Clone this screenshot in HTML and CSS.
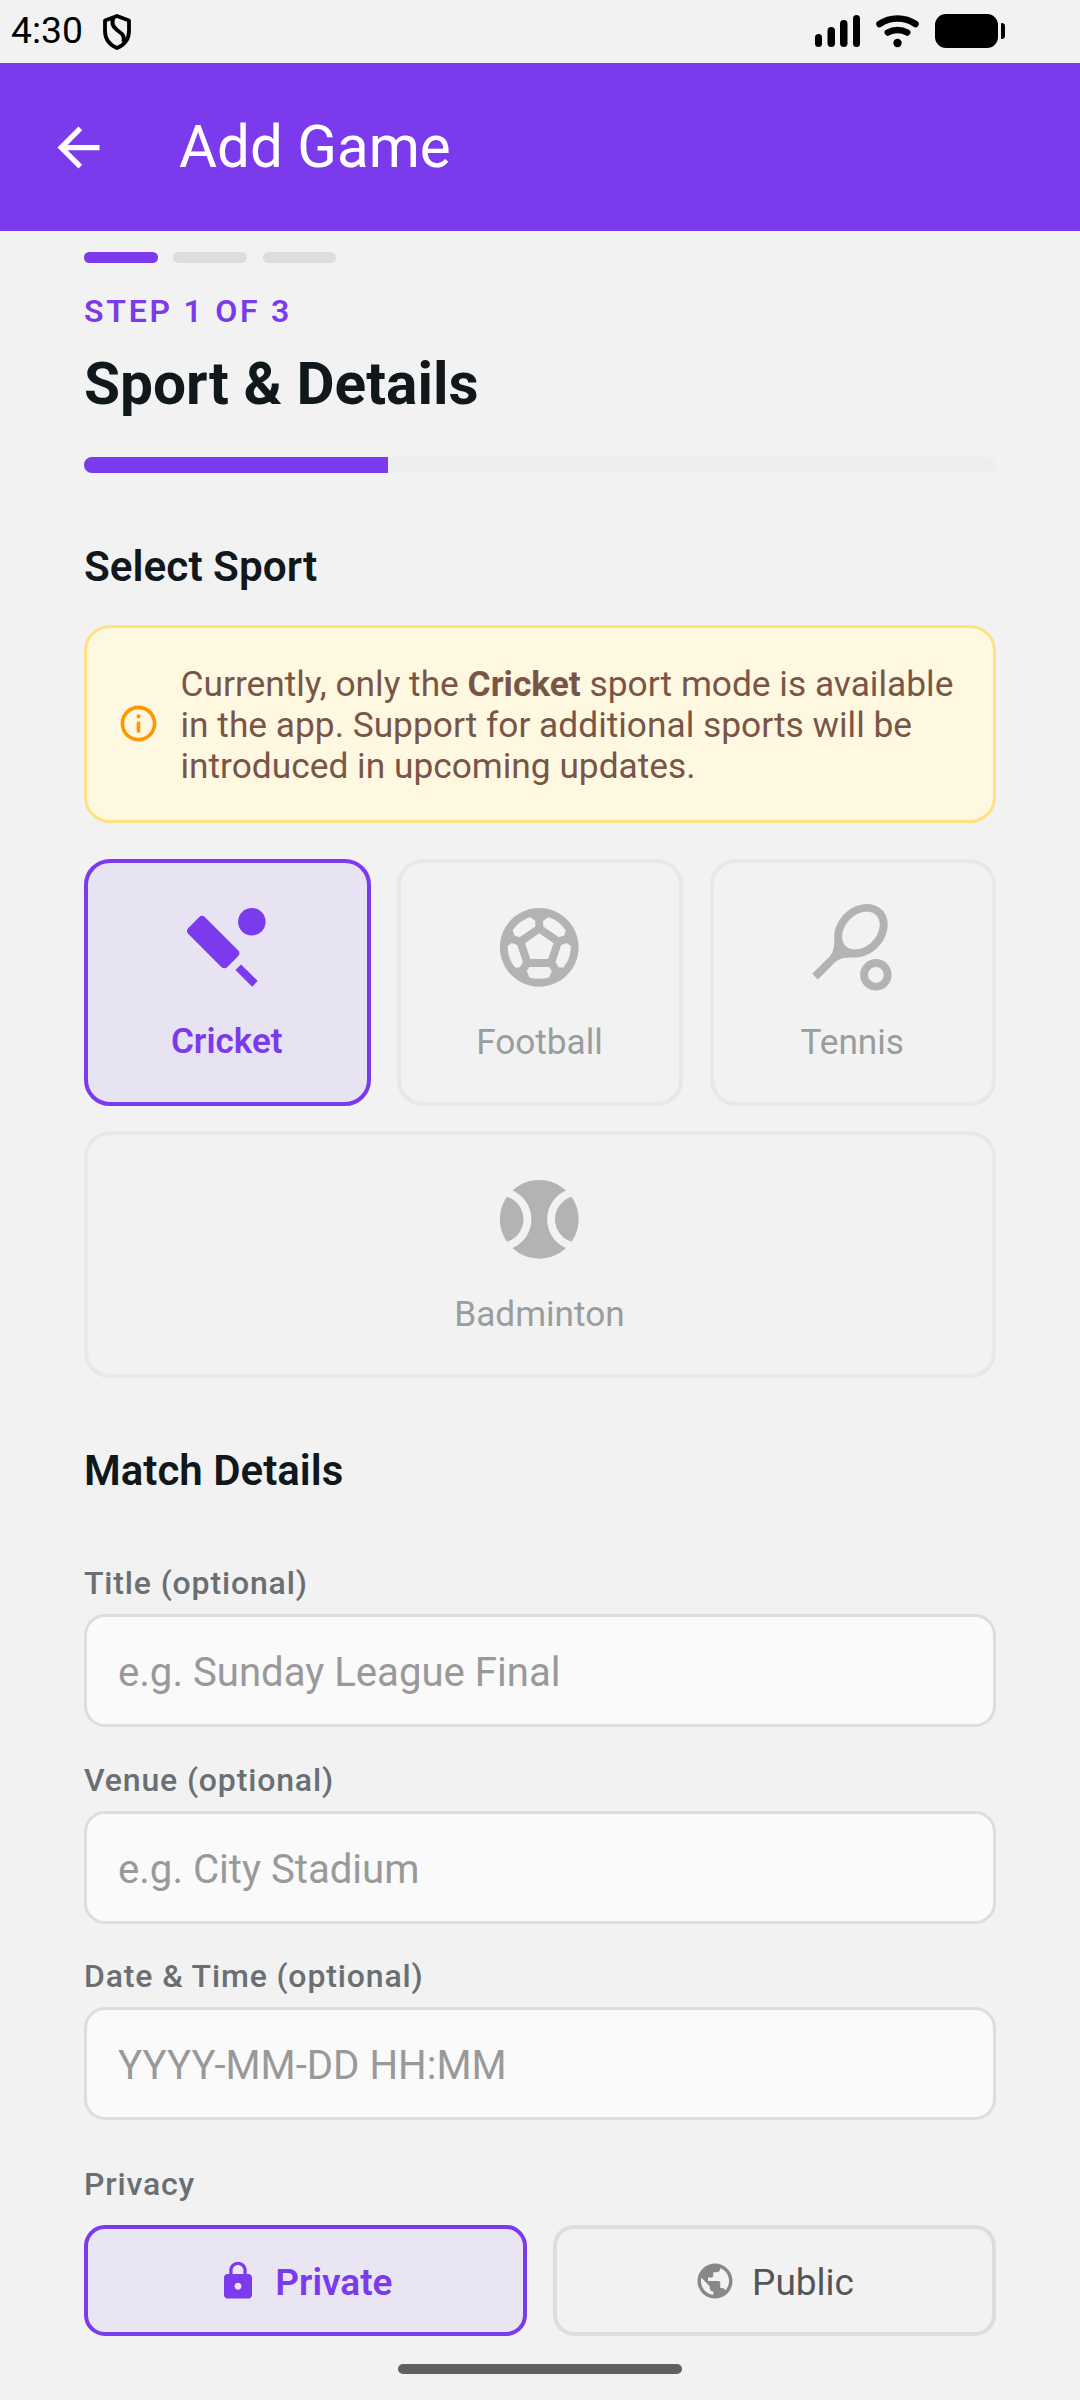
FILE: index.html
```html
<!DOCTYPE html>
<html lang="en">
<head>
<meta charset="utf-8">
<title>Add Game</title>
<link rel="stylesheet" href="styles.css">
</head>
<body>
<div class="screen">
  <div class="status">
    <span class="clock">4:30</span>
    <svg class="shield" viewBox="0 0 30 36"><path d="M15 2 27 6.500V17C27 25 22 31 15 34 8 31 3 25 3 17V6.500Z" fill="none" stroke="#000" stroke-width="3.800" stroke-linejoin="round"/><path d="M11.500 3.500C9 9 10.500 12.500 15 16 20.500 20 23 22 21.500 28" fill="none" stroke="#000" stroke-width="4"/></svg>
    <svg class="signals" viewBox="0 0 192 36">
      <g fill="#000">
        <rect x="0" y="20" width="7" height="13" rx="3.500"/>
        <rect x="12.500" y="13" width="7.500" height="20" rx="3.700"/>
        <rect x="25" y="6" width="7.500" height="27" rx="3.700"/>
        <rect x="38" y="1" width="7" height="32" rx="3.500"/>
        <circle cx="82.500" cy="29" r="4.200"/>
        <rect x="120" y="0" width="63" height="34" rx="11"/>
        <path d="M186 9c3 0 4 1 4 3v9c0 3-1 4-4 4z"/>
      </g>
      <path d="M64.500 10C75 2.500 90 2.500 100.500 10" fill="none" stroke="#000" stroke-width="6.500" stroke-linecap="round"/>
      <path d="M72.800 18.500C78.500 15.300 86.500 15.300 92.200 18.500" fill="none" stroke="#000" stroke-width="6.500" stroke-linecap="round"/>
    </svg>
  </div>
  <header class="appbar">
    <svg class="back" viewBox="0 0 24 24"><path fill="#fff" d="M20 11H7.830l5.590-5.590L12 4l-8 8 8 8 1.410-1.410L7.830 13H20v-2z"/></svg>
    <h1 class="appbar-title">Add Game</h1>
  </header>
  <main class="content">
    <div class="steps"><i class="step on"></i><i class="step"></i><i class="step"></i></div>
    <p class="step-label">STEP 1 OF 3</p>
    <h2 class="page-title">Sport &amp; Details</h2>
    <div class="progress"><div class="progress-fill"></div></div>

    <h3 class="section">Select Sport</h3>
    <div class="notice">
      <svg class="notice-icon" viewBox="0 0 24 24"><path fill="#ff9800" d="M11 7h2v2h-2zm0 4h2v6h-2zm1-9C6.480 2 2 6.480 2 12s4.480 10 10 10 10-4.480 10-10S17.520 2 12 2zm0 18c-4.410 0-8-3.590-8-8s3.590-8 8-8 8 3.590 8 8-3.590 8-8 8z"/></svg>
      <p class="notice-text">Currently, only the <b>Cricket</b> sport mode is available<br>in the app. Support for additional sports will be<br>introduced in upcoming updates.</p>
    </div>

    <div class="sports">
      <div class="sport selected">
        <svg class="sport-icon" viewBox="0 0 24 24"><path d="M15.050 12.810 6.560 4.320c-.39-.39-1.020-.39-1.410 0L2.320 7.150c-.39.39-.39 1.020 0 1.410l8.490 8.490c.39.39 1.020.39 1.410 0l2.830-2.830c.39-.39.39-1.020 0-1.410zM14.340 17.760l1.410-1.410 4.240 4.240L18.580 22z"/><circle cx="18.500" cy="5.500" r="3.500"/></svg>
        <span class="sport-name">Cricket</span>
      </div>
      <div class="sport">
        <svg class="sport-icon" viewBox="0 0 24 24"><path d="M12,2C6.480,2,2,6.480,2,12c0,5.520,4.480,10,10,10s10-4.480,10-10C22,6.480,17.520,2,12,2z M13,5.300l1.350-0.950c1.820,0.560,3.370,1.760,4.380,3.340l-0.390,1.340l-1.350,0.460L13,6.700V5.300z M9.650,4.350L11,5.300v1.400L7.010,9.490L5.660,9.030L5.270,7.690C6.280,6.120,7.830,4.920,9.650,4.350z M7.080,17.110l-1.140,0.100C4.730,15.810,4,13.990,4,12c0-0.120,0.010-0.230,0.020-0.350l1-0.730L6.400,11.400l1.460,4.340L7.080,17.110z M14.500,19.590C13.710,19.850,12.870,20,12,20s-1.710-0.150-2.500-0.410l-0.690-1.490L9.450,17h5.110l0.640,1.110L14.500,19.590z M14.270,15H9.730l-1.350-4.020L12,8.440l3.630,2.540L14.270,15z M18.060,17.210l-1.140-0.100l-0.790-1.370l1.460-4.340l1.390-0.470l1,0.730C19.990,11.770,20,11.880,20,12C20,13.990,19.270,15.810,18.060,17.210z"/></svg>
        <span class="sport-name">Football</span>
      </div>
      <div class="sport">
        <svg class="sport-icon" viewBox="0 0 24 24"><path d="M19.520,2.490c-2.340-2.340-6.620-1.870-9.550,1.060c-1.600,1.600-2.520,3.870-2.540,5.460c-0.020,1.580,0.260,3.890-1.350,5.500l-4.240,4.240l1.420,1.420l4.240-4.240c1.610-1.610,3.920-1.330,5.500-1.350s3.860-0.940,5.460-2.540C21.380,9.110,21.860,4.830,19.520,2.490z M10.320,11.680c-1.530-1.530-1.050-4.610,1.060-6.720s5.180-2.590,6.720-1.060c1.530,1.530,1.050,4.610-1.060,6.720S11.860,13.210,10.320,11.680z M18,17c0.530,0,1.040,0.210,1.410,0.590c0.780,0.780,0.780,2.050,0,2.830C19.040,20.790,18.530,21,18,21s-1.040-0.210-1.410-0.590c-0.780-0.780-0.780-2.050,0-2.830C16.960,17.210,17.470,17,18,17 M18,15c-1.020,0-2.050,0.390-2.830,1.170c-1.560,1.560-1.560,4.090,0,5.660C15.950,22.610,16.980,23,18,23s2.050-0.390,2.830-1.170c1.560-1.560,1.560-4.090,0-5.660C20.050,15.390,19.020,15,18,15L18,15z"/></svg>
        <span class="sport-name">Tennis</span>
      </div>
      <div class="sport wide">
        <svg class="sport-icon" viewBox="0 0 24 24"><path d="M3.810 6.280C2.670 7.900 2 9.870 2 12s.67 4.100 1.810 5.720C6.230 16.950 8 14.680 8 12S6.230 7.050 3.810 6.280zM20.190 6.280C17.770 7.050 16 9.320 16 12s1.770 4.950 4.190 5.720C21.330 16.100 22 14.130 22 12s-.67-4.100-1.810-5.720zM14 12c0-3.280 1.970-6.090 4.790-7.330C17.010 3.020 14.630 2 12 2S6.990 3.020 5.210 4.670C8.030 5.910 10 8.720 10 12s-1.970 6.090-4.790 7.330C6.990 20.980 9.370 22 12 22s5.010-1.020 6.790-2.670C15.970 18.090 14 15.280 14 12z"/></svg>
        <span class="sport-name">Badminton</span>
      </div>
    </div>

    <h3 class="section section-match">Match Details</h3>
    <div class="fields">
      <div class="field"><span class="label">Title (optional)</span><div class="input"><span class="hint">e.g. Sunday League Final</span></div></div>
      <div class="field"><span class="label">Venue (optional)</span><div class="input"><span class="hint">e.g. City Stadium</span></div></div>
      <div class="field"><span class="label">Date &amp; Time (optional)</span><div class="input"><span class="hint">YYYY-MM-DD HH:MM</span></div></div>
    </div>

    <span class="label privacy-label">Privacy</span>
    <div class="privacy">
      <div class="option selected">
        <svg class="option-icon" viewBox="0 0 24 24"><path d="M18 8h-1V6c0-2.760-2.240-5-5-5S7 3.240 7 6v2H6c-1.100 0-2 .9-2 2v10c0 1.100.9 2 2 2h12c1.100 0 2-.9 2-2V10c0-1.100-.9-2-2-2zm-6 9c-1.100 0-2-.9-2-2s.9-2 2-2 2 .9 2 2-.9 2-2 2zm3.100-9H8.900V6c0-1.710 1.390-3.100 3.100-3.100 1.710 0 3.100 1.390 3.100 3.100v2z"/></svg>
        <span>Private</span>
      </div>
      <div class="option">
        <svg class="option-icon" viewBox="0 0 24 24"><path d="M12 2C6.480 2 2 6.480 2 12s4.480 10 10 10 10-4.480 10-10S17.520 2 12 2zm-1 17.930c-3.950-.49-7-3.850-7-7.930 0-.62.080-1.210.21-1.790L9 15v1c0 1.100.9 2 2 2v1.930zm6.900-2.540c-.26-.81-1-1.390-1.900-1.390h-1v-3c0-.55-.45-1-1-1H8v-2h2c.55 0 1-.45 1-1V7h2c1.100 0 2-.9 2-2v-.41c2.930 1.190 5 4.060 5 7.410 0 2.080-.8 3.970-2.100 5.390z"/></svg>
        <span>Public</span>
      </div>
    </div>
  </main>
  <div class="home-bar"></div>
</div>
</body>
</html>
```
FILE: styles.css
```css
* { box-sizing: border-box; }

body {
  margin: 0;
  background: #f2f2f2;
  font-family: Roboto, "Noto Sans", sans-serif;
}

h1, h2, h3, p { margin: 0; }
svg { display: block; flex: none; }

.screen {
  width: 1080px;
  height: 2400px;
  display: flex;
  flex-direction: column;
  overflow: hidden;
}

.status {
  height: 63px;
  flex: none;
  display: flex;
  align-items: flex-start;
  padding: 14px 73px 0 11px;
}
.clock { font-size: 37.3px; line-height: 33px; color: #000; width: 91px; white-space: nowrap; }
.shield { width: 30px; height: 36px; }
.signals { width: 192px; height: 36px; margin-left: auto; }

.appbar {
  height: 168px;
  flex: none;
  display: flex;
  align-items: center;
  background: #7c3aed;
  padding-left: 47px;
}
.back { width: 63px; height: 63px; }
.appbar-title {
  margin-left: 69px;
  font-size: 58.3px;
  line-height: 68px;
  font-weight: 400;
  color: #fff;
}

.content { padding: 21px 84px 0; display: flex; flex-direction: column; }

.steps { display: flex; gap: 15.75px; }
.step { width: 73.5px; height: 11px; border-radius: 5.25px; background: #ddd; }
.step.on { background: #7c3aed; }

.step-label {
  margin-top: 30px;
  font-size: 32px;
  line-height: 37px;
  font-weight: 600;
  letter-spacing: 2.75px;
  color: #7c3aed;
}
.page-title {
  margin-top: 20px;
  font-size: 58.6px;
  line-height: 68px;
  font-weight: 700;
  color: #11181c;
}
.progress { margin-top: 39px; height: 16px; border-radius: 8px; background: #eee; overflow: hidden; }
.progress-fill { width: 33.333%; height: 100%; background: #7c3aed; }

.section {
  margin-top: 69px;
  font-size: 42.3px;
  line-height: 50px;
  font-weight: 600;
  color: #11181c;
}
.section-match { margin-top: 68px; font-size: 42px; }

.notice {
  margin-top: 33px;
  height: 198px;
  display: flex;
  align-items: center;
  gap: 20.5px;
  padding: 0 28px 0 30px;
  border: 3px solid #ffe082;
  border-radius: 26px;
  background: #fff8e1;
}
.notice-icon { width: 43px; height: 43px; margin-bottom: 2px; }
.notice-text { padding-top: 2px; font-size: 35.3px; line-height: 41px; color: #795548; white-space: nowrap; }

.sports {
  margin-top: 36px;
  display: grid;
  grid-template-columns: repeat(3, 1fr);
  grid-auto-rows: 246.5px;
  gap: 25.5px 26.25px;
}
.sport {
  display: flex;
  flex-direction: column;
  align-items: center;
  padding: 36.75px 1px 0 0;
  border: 4px solid #e8e8e8;
  border-radius: 26px;
  color: #999d9e;
}
.sport.wide { grid-column: 1 / -1; }
.sport-icon { width: 94.5px; height: 94.5px; fill: #b3b3b3; }
.sport-name { margin-top: 26.75px; font-size: 35.2px; line-height: 42px; }
.sport.selected { padding-right: 2px; border-color: #7c3aed; background: #e8e3f2; color: #7c3aed; }
.sport.selected .sport-icon { fill: #7c3aed; }
.sport.selected .sport-name { font-weight: 600; font-size: 35px; padding-left: 1px; }

.fields { margin-top: 69.5px; display: flex; flex-direction: column; gap: 34.5px; }
.field { display: flex; flex-direction: column; gap: 12px; }
.label {
  font-size: 32px;
  line-height: 37px;
  font-weight: 500;
  letter-spacing: 0.85px;
  color: #6a6f73;
}
.input {
  height: 113px;
  display: flex;
  align-items: center;
  padding: 5px 31px 0;
  border: 3px solid #ddd;
  border-radius: 21px;
  background: #fafafa;
}
.hint { font-size: 40.15px; line-height: 46px; color: #999; }

.privacy-label { margin-top: 46px; }
.privacy { margin-top: 22px; display: grid; grid-template-columns: 1fr 1fr; gap: 26.25px; }
.option {
  height: 111px;
  display: flex;
  align-items: center;
  justify-content: center;
  gap: 16px;
  padding-right: 1px;
  border: 4px solid #ddd;
  border-radius: 21px;
  font-size: 37px;
  line-height: 44px;
  color: #555;
}
.option span { padding-top: 5px; }
.option-icon { width: 42px; height: 42px; fill: #888; }
.option.selected { border-color: #7c3aed; background: #e9e5f3; color: #7c3aed; font-weight: 600; }
.option.selected .option-icon { fill: #7c3aed; }

.home-bar {
  margin: 28px auto 0;
  width: 284px;
  height: 10px;
  flex: none;
  border-radius: 5px;
  background: #606060;
}
```
